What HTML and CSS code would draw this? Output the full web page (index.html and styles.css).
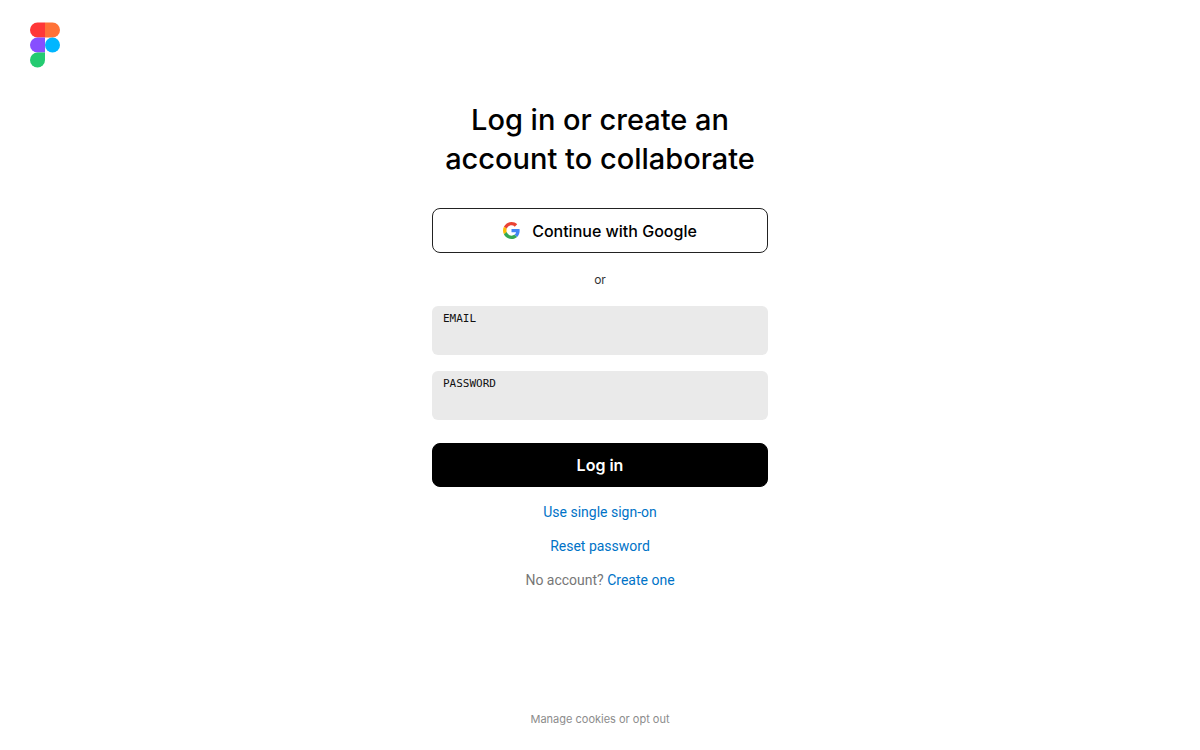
FILE: index.html
```
<!DOCTYPE html>
<html lang="en">
<head>
<meta charset="utf-8">
<meta name="viewport" content="width=device-width, initial-scale=1">
<title>Log in</title>
<link rel="stylesheet" href="styles.css">
</head>
<body class="page">
<header class="header">
  <a class="logo" href="#" aria-label="Figma home">
    <svg class="logo-mark" viewBox="0 0 30 45" aria-hidden="true">
      <path fill="#ff3737" d="M15 0H7.500a7.500 7.500 0 0 0 0 15H15z"/>
      <path fill="#ff7237" d="M15 0h7.500a7.500 7.500 0 0 1 0 15H15z"/>
      <path fill="#874fff" d="M15 15H7.500a7.500 7.500 0 0 0 0 15H15z"/>
      <circle fill="#00b6ff" cx="22.500" cy="22.500" r="7.500"/>
      <path fill="#24cb71" d="M7.500 30H15v7.500A7.500 7.500 0 1 1 7.500 30z"/>
    </svg>
  </a>
</header>
<main class="main">
  <form class="login" action="#">
    <h1 class="title">Log in or create an account to collaborate</h1>
    <button class="button button-google" type="button">
      <svg class="google-mark" viewBox="0 0 48 48" aria-hidden="true">
        <path fill="#ea4335" d="M24 9.500c3.540 0 6.710 1.220 9.210 3.600l6.850-6.850C35.900 2.380 30.470 0 24 0 14.620 0 6.510 5.380 2.560 13.220l7.980 6.190C12.430 13.720 17.740 9.500 24 9.500z"/>
        <path fill="#4285f4" d="M46.980 24.550c0-1.570-.15-3.090-.38-4.550H24v9.020h12.940c-.58 2.960-2.260 5.480-4.780 7.180l7.730 6c4.510-4.180 7.090-10.360 7.090-17.650z"/>
        <path fill="#fbbc05" d="M10.530 28.590c-.48-1.450-.76-2.990-.76-4.590s.27-3.140.76-4.590l-7.980-6.190C.92 16.460 0 20.120 0 24c0 3.880.92 7.540 2.560 10.780z"/>
        <path fill="#34a853" d="M24 48c6.480 0 11.930-2.130 15.890-5.810l-7.730-6c-2.150 1.450-4.920 2.300-8.160 2.300-6.260 0-11.570-4.220-13.470-9.910l-7.980 6.190C6.510 42.620 14.620 48 24 48z"/>
      </svg>
      <span>Continue with Google</span>
    </button>
    <p class="divider">or</p>
    <div class="fields">
      <div class="field">
        <label class="field-label" for="email">EMAIL</label>
        <input class="field-input" id="email" name="email" type="email" autocomplete="username">
      </div>
      <div class="field">
        <label class="field-label" for="password">PASSWORD</label>
        <input class="field-input" id="password" name="password" type="password" autocomplete="current-password">
      </div>
    </div>
    <button class="button button-primary" type="submit">Log in</button>
    <div class="links">
      <a class="link" href="#">Use single sign-on</a>
      <a class="link" href="#">Reset password</a>
      <p class="signup">No account? <a class="link" href="#">Create one</a></p>
    </div>
  </form>
</main>
<footer class="footer">
  <a class="cookies" href="#">Manage cookies or opt out</a>
</footer>
</body>
</html>
```
FILE: styles.css
```
* {
  box-sizing: border-box;
}

.page {
  display: flex;
  flex-direction: column;
  min-height: 100vh;
  margin: 0;
  background: #fff;
  color: #000;
  font-family: Inter, "Liberation Sans", sans-serif;
}

.header {
  padding: 22px 30px 0;
}

.logo {
  display: inline-block;
  vertical-align: top;
}

.logo-mark {
  display: block;
  width: 30px;
  height: 46px;
}

.main {
  display: flex;
  flex: 1;
  justify-content: center;
  padding: 32px 16px 24px;
}

.login {
  display: flex;
  flex-direction: column;
  width: 100%;
  max-width: 336px;
}

.title {
  margin: 0 0 30px;
  font-size: 29px;
  font-weight: 500;
  line-height: 39px;
  text-align: center;
}

.button {
  display: flex;
  align-items: center;
  justify-content: center;
  gap: 12px;
  width: 100%;
  min-height: 45px;
  padding: 0 16px;
  border: 1px solid #000;
  border-radius: 8px;
  font-family: inherit;
  font-size: 16px;
  font-weight: 500;
  cursor: pointer;
}

.button-google {
  border-color: #222;
  background: #fff;
  color: #000;
}

.google-mark {
  width: 17px;
  height: 17px;
}

.button-primary {
  min-height: 44px;
  background: #000;
  color: #fff;
  font-weight: 600;
}

.divider {
  margin: 17px 0 16px;
  color: #333;
  font-size: 12px;
  line-height: 20px;
  text-align: center;
}

.fields {
  display: flex;
  flex-direction: column;
  gap: 16px;
  margin-bottom: 23px;
}

.field {
  display: flex;
  flex-direction: column;
  padding: 6px 11px 3px;
  border-radius: 6px;
  background: #eaeaea;
}

.field-label {
  color: #111;
  font-family: "DejaVu Sans Mono", "Liberation Mono", monospace;
  font-size: 11px;
  line-height: 14px;
}

.field-input {
  width: 100%;
  height: 26px;
  padding: 0;
  border: 0;
  outline: 0;
  background: transparent;
  font-family: inherit;
  font-size: 16px;
}

.links {
  display: flex;
  flex-direction: column;
  align-items: center;
  gap: 14px;
  margin-top: 15px;
  font-family: Roboto, "Liberation Sans", sans-serif;
  font-size: 14px;
  line-height: 20px;
}

.link {
  color: #0073c7;
  text-decoration: none;
}

.signup {
  margin: 0;
  color: #777;
}

.footer {
  padding: 0 16px 23px;
  text-align: center;
  font-size: 11px;
  line-height: 16px;
}

.cookies {
  color: #8c8c8c;
  text-decoration: none;
}
```
